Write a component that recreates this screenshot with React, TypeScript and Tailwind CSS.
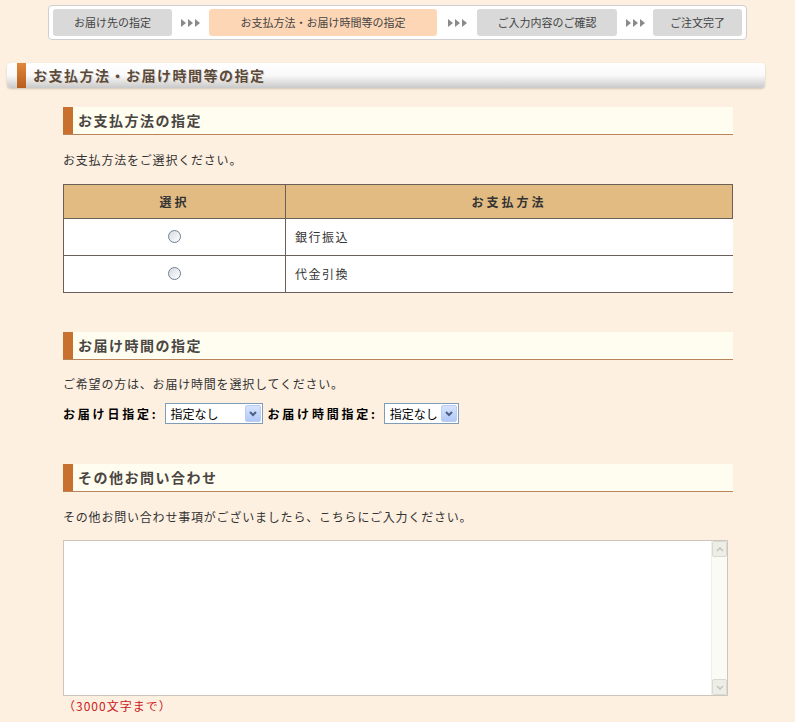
import React from 'react';

const FONT = { fontFamily: '"Noto Sans CJK JP", "Noto Sans", sans-serif' };

const steps = [
  { label: 'お届け先の指定', w: 'w-[119px]', active: false },
  { label: 'お支払方法・お届け時間等の指定', w: 'w-[228px]', active: true },
  { label: 'ご入力内容のご確認', w: 'w-[140px]', active: false },
  { label: 'ご注文完了', w: 'w-[89px]', active: false },
];

const arrowWidths = ['w-[37px]', 'w-[40px]', 'w-[36px]'];

const Arrows = ({ w }: { w: string }) => (
  <div className={`${w} flex items-center justify-center gap-[2px]`}>
    {[0, 1, 2].map((i) => (
      <svg key={i} width="5" height="8" viewBox="0 0 5 8">
        <path d="M0 0 L5 4 L0 8 Z" fill="#8a8a8a" />
      </svg>
    ))}
  </div>
);

const SectionHeading = ({ title }: { title: string }) => (
  <div className="flex h-[28px] bg-[#fffdf0] border-b border-[#b9845a]">
    <div className="w-[10px] bg-[#c8702e]"></div>
    <div className="flex items-center pl-[5px] text-[14px] font-bold tracking-[1.5px] text-[#4a4642]">
      {title}
    </div>
  </div>
);

const Radio = () => (
  <span className="inline-block w-[13px] h-[13px] rounded-full border border-[#6f8193] bg-gradient-to-br from-[#d5dbe2] to-white"></span>
);

const Select = ({ w }: { w: string }) => (
  <div className={`${w} relative h-[21px] border border-[#7f9db9] bg-white flex items-center`}>
    <span className="pl-[5px] text-[12px] text-black">指定なし</span>
    <div className="absolute right-[1px] top-[1px] bottom-[1px] w-[16px] rounded-[2px] border border-[#b9cdf5] bg-gradient-to-b from-[#d6e3fd] to-[#b1c8f8] flex items-center justify-center">
      <svg width="8" height="6" viewBox="0 0 8 6">
        <path d="M1 1 L4 4 L7 1" stroke="#4d6185" strokeWidth="2" fill="none" />
      </svg>
    </div>
  </div>
);

export default function App() {
  return (
    <div className="min-h-[722px] w-[795px] bg-[#fdf0e1] text-[#333] pt-[5px] pb-[10px]" style={FONT}>
      {/* step bar */}
      <div className="ml-[48px] w-[699px] h-[35px] bg-white border border-[#cfcfcf] rounded-[4px] flex items-center pl-[4px]">
        {steps.map((s, i) => (
          <React.Fragment key={i}>
            <div
              className={`${s.w} h-[27px] rounded-[3px] flex items-center justify-center text-[11px] text-[#444] ${
                s.active ? 'bg-[#fdd6b5]' : 'bg-[#d9d9d9]'
              }`}
            >
              {s.label}
            </div>
            {i < 3 && <Arrows w={arrowWidths[i]} />}
          </React.Fragment>
        ))}
      </div>

      {/* page heading */}
      <div className="mt-[23px] ml-[7px] w-[758px] h-[25px] rounded-[4px] flex pl-[10px] bg-gradient-to-b from-white via-[#f9f9f9] to-[#c9c9c9] shadow-[0_1px_2px_rgba(150,130,110,0.4)]">
        <div className="w-[9px] bg-gradient-to-b from-[#e0883a] to-[#b85d1e]"></div>
        <div className="flex items-center pl-[7px] text-[14px] font-bold tracking-[1.5px] text-[#5a4a3a] [text-shadow:0_0_2px_#ffffff,1px_1px_0_#d8c8b8]">
          お支払方法・お届け時間等の指定
        </div>
      </div>

      <div className="ml-[63px] w-[670px]">
        {/* payment */}
        <div className="mt-[19px]">
          <SectionHeading title="お支払方法の指定" />
          <p className="mt-[16px] text-[12px] tracking-[0.8px] leading-[18px]">お支払方法をご選択ください。</p>
          <table className="mt-[15px] w-full border-collapse text-[12px]">
            <thead>
              <tr className="h-[34px] bg-[#e2bb82]">
                <th className="w-[222px] border border-[#6b6059] font-bold tracking-[3px]">選択</th>
                <th className="border border-[#6b6059] font-bold tracking-[3px]">お支払方法</th>
              </tr>
            </thead>
            <tbody className="bg-white">
              {['銀行振込', '代金引換'].map((m) => (
                <tr key={m} className="h-[37px]">
                  <td className="border-l border-b border-[#6b6059] text-center align-middle">
                    <span className="inline-flex pt-[2px]">
                      <Radio />
                    </span>
                  </td>
                  <td className="border-l border-b border-[#6b6059] pl-[9px] tracking-[1.5px]">{m}</td>
                </tr>
              ))}
            </tbody>
          </table>
        </div>

        {/* delivery time */}
        <div className="mt-[39px]">
          <SectionHeading title="お届け時間の指定" />
          <p className="mt-[15px] text-[12px] tracking-[0.8px] leading-[18px]">ご希望の方は、お届け時間を選択してください。</p>
          <div className="mt-[10px] flex items-center">
            <span className="text-[12px] font-bold tracking-[2.8px] text-black">お届け日指定:</span>
            <div className="ml-[6px]">
              <Select w="w-[98px]" />
            </div>
            <span className="ml-[5px] text-[12px] font-bold tracking-[2.8px] text-black">お届け時間指定:</span>
            <div className="ml-[6px]">
              <Select w="w-[75px]" />
            </div>
          </div>
        </div>

        {/* other */}
        <div className="mt-[40px]">
          <SectionHeading title="その他お問い合わせ" />
          <p className="mt-[16px] text-[12px] tracking-[0.8px] leading-[18px]">その他お問い合わせ事項がございましたら、こちらにご入力ください。</p>
          <div className="mt-[14px] w-[665px] h-[156px] border border-[#cdc6bf] bg-white flex">
            <textarea className="flex-1 resize-none outline-none p-[2px] text-[12px]"></textarea>
            <div className="w-[16px] bg-[#fbfbf6] border-l border-[#efefe8] flex flex-col justify-between">
              <div className="h-[16px] bg-[#eeeee8] border border-[#dadad2] rounded-[2px] flex items-center justify-center">
                <svg width="8" height="5" viewBox="0 0 8 5">
                  <path d="M1 4 L4 1 L7 4" stroke="#c5c5bd" strokeWidth="1.6" fill="none" />
                </svg>
              </div>
              <div className="h-[16px] bg-[#eeeee8] border border-[#dadad2] rounded-[2px] flex items-center justify-center">
                <svg width="8" height="5" viewBox="0 0 8 5">
                  <path d="M1 1 L4 4 L7 1" stroke="#c5c5bd" strokeWidth="1.6" fill="none" />
                </svg>
              </div>
            </div>
          </div>
          <p className="mt-[1px] text-[12px] tracking-[1px] text-[#cc2020] leading-[18px]">（3000文字まで）</p>
        </div>
      </div>
    </div>
  );
}
